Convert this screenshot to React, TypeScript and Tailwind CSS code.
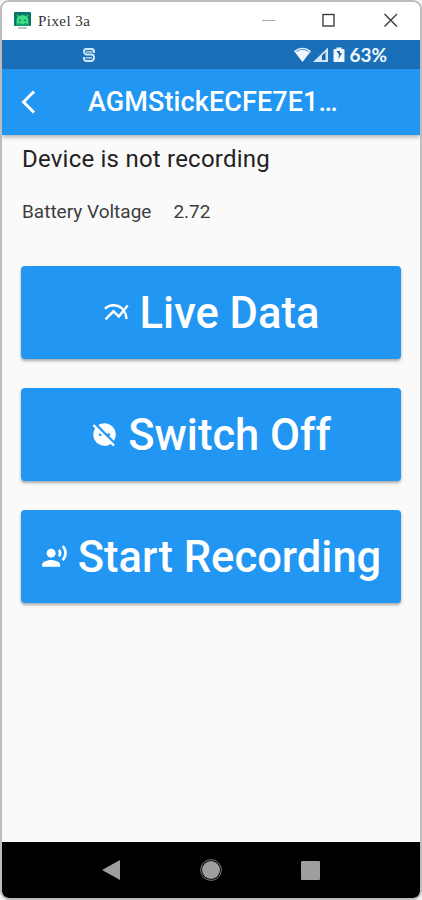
import type { ReactNode } from "react";
import { MdDoDisturbOff, MdRecordVoiceOver } from "react-icons/md";

interface ActionButtonProps {
  icon: ReactNode;
  label: string;
}

function WindowBar() {
  return (
    <div className="flex h-[38px] shrink-0 items-center bg-white pl-[12px]">
      <svg width="17" height="18" viewBox="0 0 17 18">
        <rect x="0" y="0" width="17" height="14" rx="1" fill="#087566" />
        <path d="M2.5 13V8.500a6 5.500 0 0 1 12 0V13z" fill="#3ddc84" />
        <path d="M3 3l2.500 3M14 3l-2.500 3" stroke="#3ddc84" strokeWidth="1.200" />
        <circle cx="6" cy="8.300" r="0.900" fill="#087566" />
        <circle cx="11" cy="8.300" r="0.900" fill="#087566" />
        <path d="M2 13l3-2 3.500 1.500 3.500-1.500 3 2v1H2z" fill="#0b9d6b" />
        <rect x="4" y="15" width="9" height="2" fill="#bdc5c5" />
      </svg>
      <span className="ml-[7px] font-['Liberation_Serif',serif] text-[15px] leading-none tracking-[0.450px] text-[#333]">
        Pixel 3a
      </span>
      <svg className="mb-[2px] ml-auto mr-[20px]" width="140" height="16" viewBox="0 0 140 16" fill="none">
        <path d="M2 8.500h13" stroke="#aaa" strokeWidth="1.200" />
        <rect x="63" y="2.500" width="11" height="11.500" stroke="#333" strokeWidth="1.300" />
        <path d="M124.500 2l12.500 12.500M137 2l-12.500 12.500" stroke="#333" strokeWidth="1.300" />
      </svg>
    </div>
  );
}

function StatusBar() {
  return (
    <div className="flex h-[29px] shrink-0 items-center bg-[#1a70b8] pl-[80px] pr-[33px] text-[#f0f7ff]">
      <svg width="14" height="16" viewBox="0 0 14 16" fill="none" stroke="#d3e6f7" strokeWidth="1.900">
        <path d="M12 6V4.500Q12 2 9.500 2h-5Q2 2 2 4.500T4.500 7.500h5Q12 7.500 12 10.500T9.500 14h-5Q2 14 2 11.500V10" />
        <path d="M4 4.900h6.500M3.500 10.800H10" strokeWidth="1.200" />
      </svg>
      <svg className="ml-auto" width="53" height="18" viewBox="0 0 53 18">
        <path d="M0 5Q8.500-1.500 17 5L8.500 16z" fill="#f0f7ff" />
        <path d="M2.500 5.500Q8.500 1.300 14.500 5.500" fill="none" stroke="#3c87c7" strokeWidth="1" />
        <path d="M19 16L34 1.500V16z" fill="#d3e6f7" />
        <path d="M28 14V9.500l3.500-3.300V14z" fill="#1a62ab" />
        <path d="M42.500 3V1.500h5V3h2q1 0 1 1v11q0 1-1 1h-9q-1 0-1-1V4q0-1 1-1z" fill="#f0f7ff" />
        <path d="M42.500 5l2.500 3.500-.5 4.500L48 7l-2 .2L46 5z" fill="#1a62ab" />
      </svg>
      <span className="ml-[2px] font-['Lato',sans-serif] text-[19px] font-bold leading-none">63%</span>
    </div>
  );
}

function ChartIcon() {
  return (
    <svg width="27" height="27" viewBox="0 0 27 27" fill="none" stroke="currentColor" strokeWidth="2.400">
      <path d="M2 9.800C6.500 5.200 14.500 5 19 9.500Q23 13.500 23.500 20" />
      <path d="M2.500 20.300L10.500 12.300 15.800 17.500 24.700 6.500" />
    </svg>
  );
}

function ActionButton({ icon, label }: ActionButtonProps) {
  return (
    <button className="flex h-[93px] w-full items-center justify-center gap-[10px] rounded-[4px] bg-[#2196f3] text-white shadow-[0_2px_3px_rgba(0,0,0,0.32)]">
      {icon}
      <span className="pt-[2px] text-[43.500px] font-medium leading-none">{label}</span>
    </button>
  );
}

function NavBar() {
  return (
    <div className="flex h-[56px] shrink-0 items-center justify-center rounded-b-[6px] bg-black">
      <svg width="220" height="26" viewBox="0 0 220 26" fill="#9e9e9e">
        <path d="M1 13L19 3v20z" />
        <circle cx="110" cy="13" r="9" />
        <circle cx="110" cy="13" r="10.400" fill="none" stroke="#777" strokeWidth="1" />
        <rect x="200" y="4" width="19" height="19" rx="1" />
      </svg>
    </div>
  );
}

export default function App() {
  return (
    <div className="h-[900px] w-[422px] bg-[#f3f3f3] font-['Roboto',sans-serif]">
      <div className="flex h-[900px] flex-col overflow-hidden rounded-[9px] border-2 border-[#bdbdbd] bg-[#fafafa]">
        <WindowBar />
        <StatusBar />
        <header className="flex h-[66px] shrink-0 items-center bg-[#2196f3] pl-[18px] text-white shadow-[0_2px_4px_rgba(0,0,0,0.3)]">
          <svg width="18" height="26" viewBox="0 0 18 26" fill="none" stroke="currentColor" strokeWidth="3">
            <path d="M14 2.500L3.500 13 14 23.500" />
          </svg>
          <h1 className="ml-[50px] whitespace-nowrap text-[27px] font-medium leading-none tracking-[0.100px]">
            AGMStickECFE7E1…
          </h1>
        </header>

        <main className="flex flex-1 flex-col px-[19px] pt-[9px]">
          <p className="pl-px text-[24px] leading-[30px] tracking-[0.220px] text-[#222]">Device is not recording</p>
          <div className="mt-[13px] flex h-[50px] items-center gap-[22px] pl-px text-[19px] text-[#3d3d3d]">
            <span>Battery Voltage</span>
            <span>2.72</span>
          </div>
          <div className="mt-[29px] flex flex-col gap-[29px]">
            <ActionButton icon={<ChartIcon />} label="Live Data" />
            <ActionButton icon={<MdDoDisturbOff className="size-[27px]" />} label="Switch Off" />
            <ActionButton icon={<MdRecordVoiceOver className="size-[27px]" />} label="Start Recording" />
          </div>
        </main>
        <NavBar />
      </div>
    </div>
  );
}
